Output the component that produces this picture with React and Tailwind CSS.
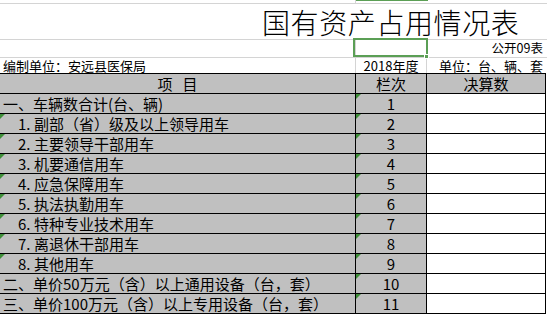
import React from 'react';

const rows = [
  { label: '一、车辆数合计(台、辆)', no: '1' },
  { num: '1.', label: '副部（省）级及以上领导用车', no: '2' },
  { num: '2.', label: '主要领导干部用车', no: '3' },
  { num: '3.', label: '机要通信用车', no: '4' },
  { num: '4.', label: '应急保障用车', no: '5' },
  { num: '5.', label: '执法执勤用车', no: '6' },
  { num: '6.', label: '特种专业技术用车', no: '7' },
  { num: '7.', label: '离退休干部用车', no: '8' },
  { num: '8.', label: '其他用车', no: '9' },
  { label: '二、单价50万元（含）以上通用设备（台，套）', no: '10' },
  { label: '三、单价100万元（含）以上专用设备（台，套）', no: '11' },
];

function Marker() {
  return (
    <span className="absolute left-0 top-0 w-0 h-0 border-t-[5px] border-r-[5px] border-t-[#3f8f3a] border-r-transparent" />
  );
}

export default function App() {
  return (
    <div className="w-[547px] h-[316px] overflow-hidden bg-white text-black font-['Noto_Sans_CJK_SC',sans-serif]">
      {/* column header strip */}
      <div className="flex h-[4px] border-b border-[#d4d4d4]">
        <div className="w-[356px] border-r border-[#d4d4d4]" />
        <div className="w-[72px] border-t border-[#5b9f55]" />
        <div className="flex-1" />
      </div>

      {/* title */}
      <div className="flex h-[36px] items-center border-b border-[#d4d4d4] pl-[262px]">
        <span className="text-[28px] leading-[28px] font-light tracking-[0.6px] whitespace-nowrap">国有资产占用情况表</span>
      </div>

      <div className="flex h-[18px] border-b border-[#d4d4d4]">
        <div className="w-[356px] border-r border-[#d4d4d4]" />
        <div className="relative w-[71px] border-r border-[#d4d4d4]">
          <div className="absolute -left-[3px] -top-[2px] w-[75px] h-[19px] border-2 border-[#5b9f55]" />
          <div className="absolute -right-[3px] -bottom-[2px] w-[5px] h-[5px] bg-[#5b9f55] border border-white" />
        </div>
        <div className="flex flex-1 items-center justify-end pr-[4px] text-[12.5px] leading-none">公开09表</div>
      </div>

      <div className="flex h-[15px] text-[13px] leading-none">
        <div className="flex w-[356px] items-center border-r border-[#d4d4d4] pl-[3px]">编制单位：安远县医保局</div>
        <div className="flex w-[71px] items-center justify-center border-r border-[#d4d4d4]">2018年度</div>
        <div className="flex flex-1 items-center justify-end pr-[4px] whitespace-nowrap">单位：台、辆、套</div>
      </div>

      {/* table */}
      <div className="w-[546px] border-t border-black text-[15px] leading-none">
        <div className="flex h-[20px] border-b border-black bg-[#c0c0c0]">
          <div className="flex w-[356px] items-center justify-center border-r border-black whitespace-pre">项   目</div>
          <div className="flex w-[71px] items-center justify-center border-r border-black">栏次</div>
          <div className="flex w-[119px] items-center justify-center border-r border-black">决算数</div>
        </div>
        {rows.map((r) => (
          <div key={r.no} className="flex h-[20px] border-b border-black">
            <div
              className={`relative flex w-[356px] items-center border-r border-black bg-[#c0c0c0] whitespace-nowrap ${r.num ? 'pl-[18px]' : 'pl-[3px]'}`}
            >
              {r.num && <Marker />}
              {r.num && <span className="inline-block w-[16px]">{r.num}</span>}
              {r.label}
            </div>
            <div className="relative flex w-[71px] items-center justify-center border-r border-black bg-[#c0c0c0]">
              <Marker />
              {r.no}
            </div>
            <div className="w-[119px] border-r border-black bg-white" />
          </div>
        ))}
      </div>
    </div>
  );
}
